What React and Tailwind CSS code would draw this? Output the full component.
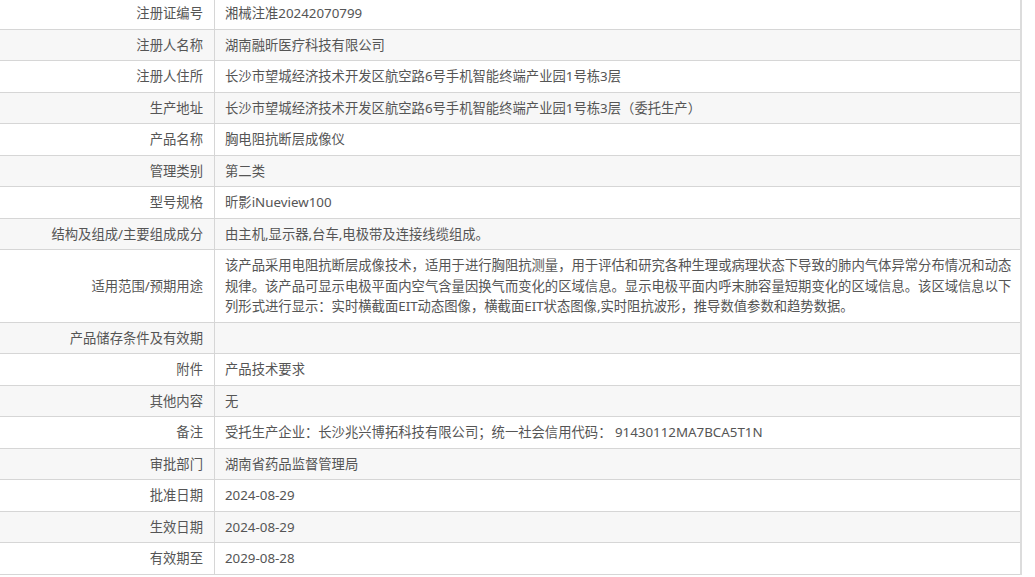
const rows = [
  ['注册证编号', '湘械注准20242070799'],
  ['注册人名称', '湖南融昕医疗科技有限公司'],
  ['注册人住所', '长沙市望城经济技术开发区航空路6号手机智能终端产业园1号栋3层'],
  ['生产地址', '长沙市望城经济技术开发区航空路6号手机智能终端产业园1号栋3层（委托生产）'],
  ['产品名称', '胸电阻抗断层成像仪'],
  ['管理类别', '第二类'],
  ['型号规格', '昕影iNueview100'],
  ['结构及组成/主要组成成分', '由主机,显示器,台车,电极带及连接线缆组成。'],
  [
    '适用范围/预期用途',
    '该产品采用电阻抗断层成像技术，适用于进行胸阻抗测量，用于评估和研究各种生理或病理状态下导致的肺内气体异常分布情况和动态规律。该产品可显示电极平面内空气含量因换气而变化的区域信息。显示电极平面内呼末肺容量短期变化的区域信息。该区域信息以下列形式进行显示：实时横截面EIT动态图像，横截面EIT状态图像,实时阻抗波形，推导数值参数和趋势数据。',
  ],
  ['产品储存条件及有效期', ''],
  ['附件', '产品技术要求'],
  ['其他内容', '无'],
  ['备注', '受托生产企业：长沙兆兴博拓科技有限公司；统一社会信用代码： 91430112MA7BCA5T1N'],
  ['审批部门', '湖南省药品监督管理局'],
  ['批准日期', '2024-08-29'],
  ['生效日期', '2024-08-29'],
  ['有效期至', '2029-08-28'],
]

export default function App() {
  return (
    <div className="min-h-screen bg-white overflow-hidden font-['Noto_Sans','Noto_Sans_CJK_SC',sans-serif] text-[13.33px] leading-[20.5px] text-[#555]">
      <div className="w-[1022px] -mt-[2px] border-r-2 border-[#dcdcdc]">
        {rows.map(([label, value], i) => (
          <div
            key={label}
            className={`grid grid-cols-[215px_1fr] border-b border-[#d6d6d6] ${i % 2 === 1 ? 'bg-[#f7f7f7]' : 'bg-white'}`}
          >
            <div className="flex items-center justify-end border-r border-[#d6d6d6] pr-[11px] py-[5px] text-right">
              {label}
            </div>
            <div className="pl-[10px] pr-[5px] py-[5px]">{value}</div>
          </div>
        ))}
      </div>
    </div>
  )
}
